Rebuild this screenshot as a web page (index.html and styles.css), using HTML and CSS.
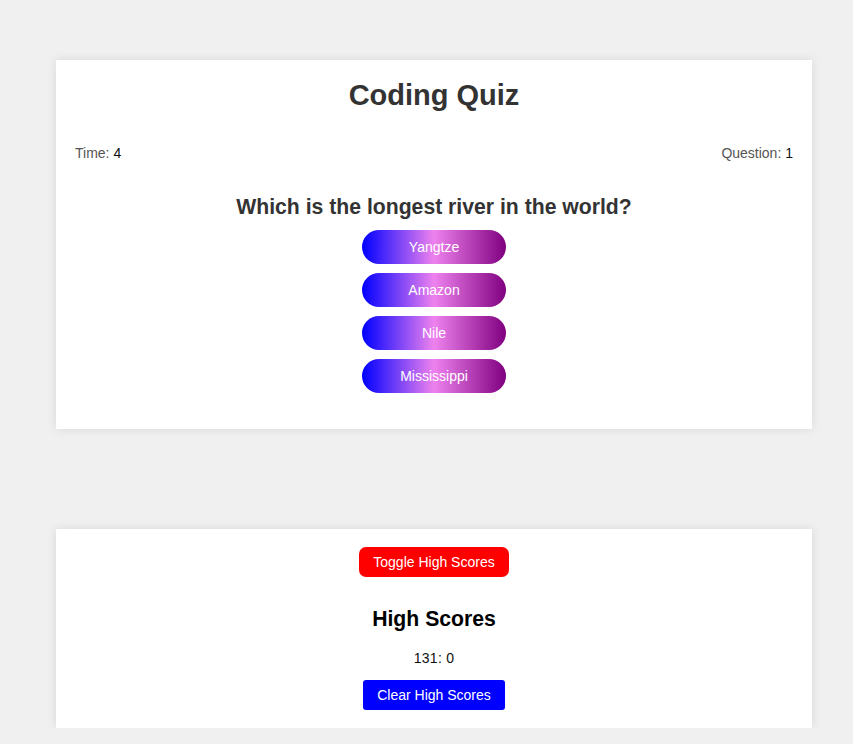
FILE: index.html
```html
<!DOCTYPE html>
<html lang="en">
<head>
<meta charset="utf-8">
<title>Coding Quiz</title>
<link rel="stylesheet" href="styles.css">
</head>
<body>
<main class="page">
  <section class="card quiz">
    <h1 class="title">Coding Quiz</h1>
    <div class="status">
      <div class="stat">Time: <span class="stat-value">4</span></div>
      <div class="stat">Question: <span class="stat-value">1</span></div>
    </div>
    <h2 class="question">Which is the longest river in the world?</h2>
    <div class="answers">
      <button class="answer">Yangtze</button>
      <button class="answer">Amazon</button>
      <button class="answer">Nile</button>
      <button class="answer">Mississippi</button>
    </div>
  </section>
  <section class="card scores">
    <button class="toggle">Toggle High Scores</button>
    <h2 class="scores-title">High Scores</h2>
    <div class="score-item">131: 0</div>
    <button class="clear">Clear High Scores</button>
  </section>
</main>
</body>
</html>
```

FILE: styles.css
```css
* { box-sizing: border-box; }
html, body {
  margin: 0;
  padding: 0;
  background: #f0f0f0;
  font-family: "Liberation Sans", Arial, sans-serif;
}
.page {
  padding-top: 60px;
  padding-left: 56px;
  display: flex;
  flex-direction: column;
  gap: 100px;
}
.card {
  width: 756px;
  background: #fff;
  box-shadow: 0 0 10px rgba(0, 0, 0, 0.1);
}
.quiz {
  padding: 19px 19px 36px;
  display: flex;
  flex-direction: column;
}
.title {
  margin: 0;
  text-align: center;
  font-size: 29px;
  line-height: 33px;
  color: #333;
  font-weight: bold;
}
.status {
  margin-top: 33px;
  display: flex;
  justify-content: space-between;
  font-size: 14px;
  line-height: 16px;
  color: #555;
}
.stat-value { color: #111; }
.question {
  margin: 34px 0 0;
  text-align: center;
  font-size: 21.2px;
  line-height: 24px;
  color: #333;
  font-weight: bold;
}
.answers {
  margin-top: 11px;
  display: flex;
  flex-direction: column;
  align-items: center;
  gap: 9px;
}
.answer {
  width: 144px;
  height: 34px;
  border: none;
  border-radius: 17px;
  background: linear-gradient(to right, blue, violet, purple);
  color: #fff;
  font-family: "Liberation Sans", Arial, sans-serif;
  font-size: 14px;
  padding: 0;
}
.scores {
  padding: 18px 20px 18px;
  display: flex;
  flex-direction: column;
  align-items: center;
}
.toggle {
  height: 30px;
  padding: 0 14px;
  border: none;
  border-radius: 7px;
  background: #ff0000;
  color: #fff;
  font-family: "Liberation Sans", Arial, sans-serif;
  font-size: 14px;
}
.scores-title {
  margin: 30px 0 0;
  font-size: 21.2px;
  line-height: 24px;
  color: #000;
  font-weight: bold;
}
.score-item {
  margin-top: 19px;
  font-size: 14px;
  line-height: 16px;
  color: #111;
  letter-spacing: 0.3px;
}
.clear {
  margin-top: 14px;
  height: 30px;
  padding: 0 14px;
  border: none;
  border-radius: 3px;
  background: #0000ff;
  color: #fff;
  font-family: "Liberation Sans", Arial, sans-serif;
  font-size: 14px;
}
```
